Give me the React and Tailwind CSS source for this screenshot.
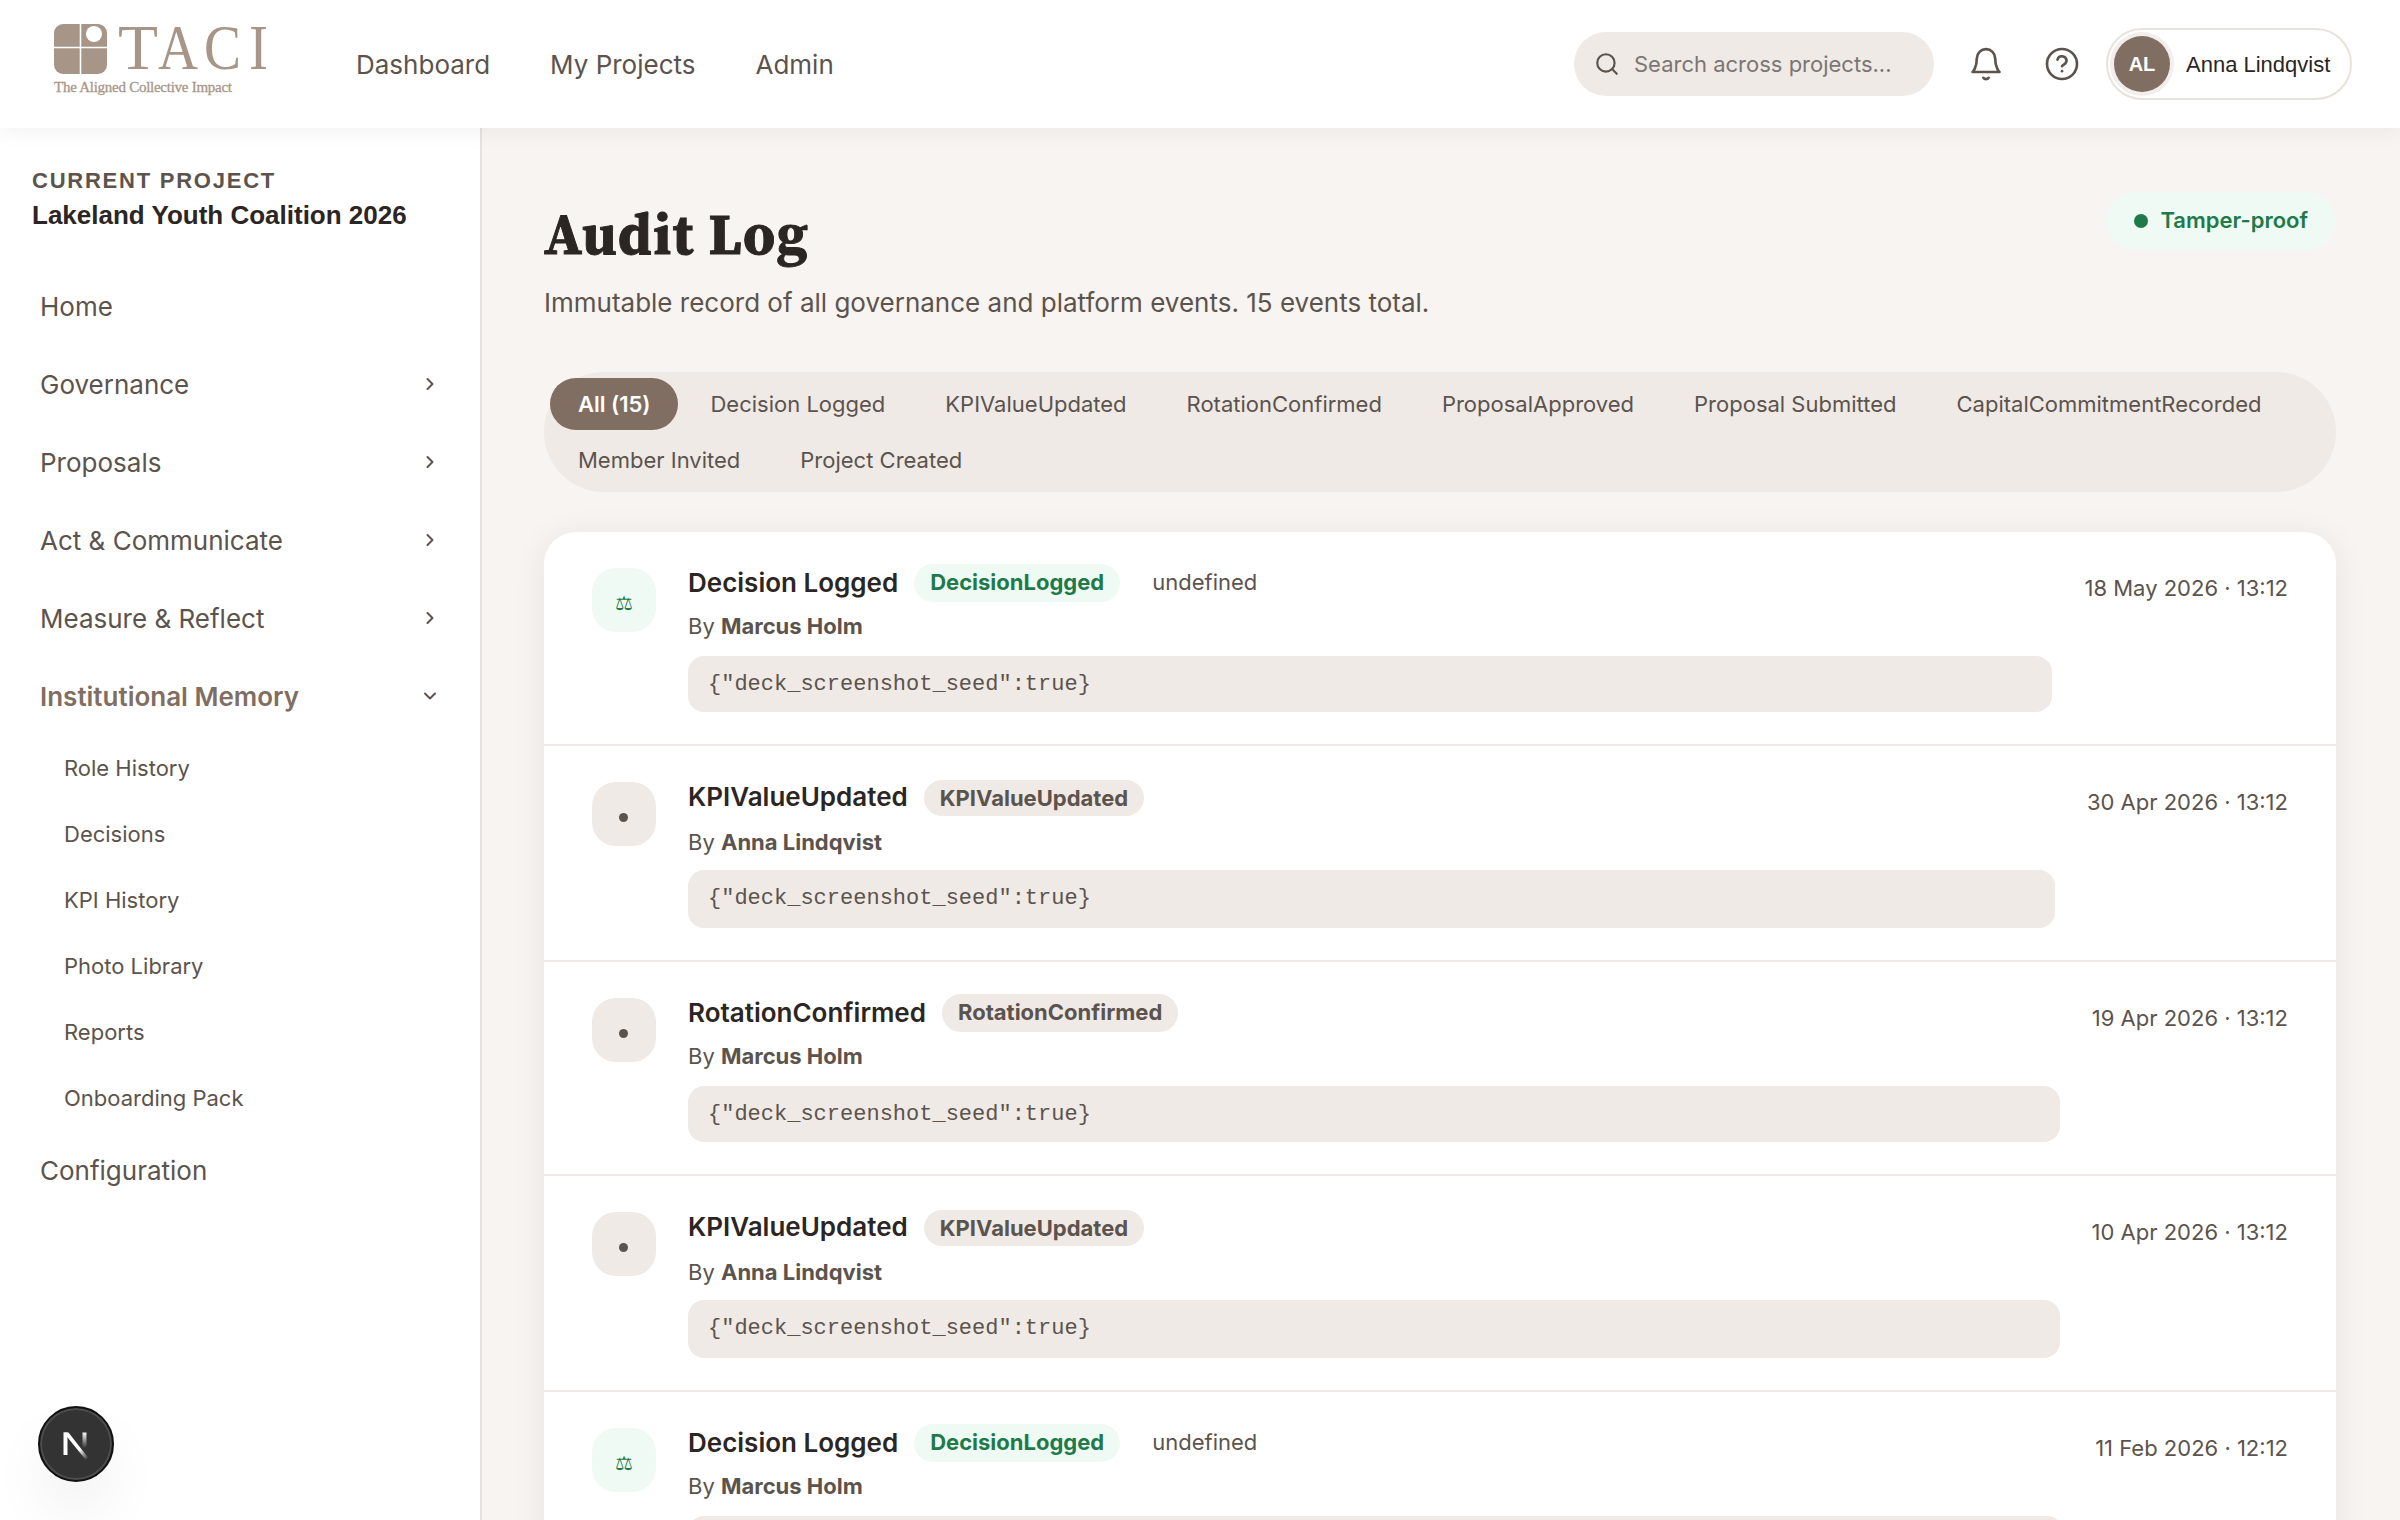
import React from "react";

const navItems = [
  { label: "Home" },
  { label: "Governance", chevron: "right" },
  { label: "Proposals", chevron: "right" },
  { label: "Act & Communicate", chevron: "right" },
  { label: "Measure & Reflect", chevron: "right" },
  { label: "Institutional Memory", chevron: "down", active: true },
];

const memoryItems = [
  "Role History",
  "Decisions",
  "KPI History",
  "Photo Library",
  "Reports",
  "Onboarding Pack",
];

const filters = [
  "All (15)",
  "Decision Logged",
  "KPIValueUpdated",
  "RotationConfirmed",
  "ProposalApproved",
  "Proposal Submitted",
  "CapitalCommitmentRecorded",
  "Member Invited",
  "Project Created",
];

const events = [
  { title: "Decision Logged", tag: "DecisionLogged", by: "Marcus Holm", date: "18 May 2026 · 13:12", decision: true },
  { title: "KPIValueUpdated", tag: "KPIValueUpdated", by: "Anna Lindqvist", date: "30 Apr 2026 · 13:12" },
  { title: "RotationConfirmed", tag: "RotationConfirmed", by: "Marcus Holm", date: "19 Apr 2026 · 13:12" },
  { title: "KPIValueUpdated", tag: "KPIValueUpdated", by: "Anna Lindqvist", date: "10 Apr 2026 · 13:12" },
  { title: "Decision Logged", tag: "DecisionLogged", by: "Marcus Holm", date: "11 Feb 2026 · 12:12", decision: true },
];

function Logo() {
  return (
    <svg width="224" height="104" viewBox="0 -12 224 104" className="text-[#a79687]" fill="currentColor">
      <rect x="2" y="8" width="53" height="50" rx="9" />
      <path d="M28.5 8v50M2 31.5h53" stroke="#fff" strokeWidth="1.6" />
      <circle cx="42" cy="18" r="8" fill="#fff" />
      <g fontFamily="Liberation Serif, serif" fontSize="63">
        <text x="66" y="53" textLength="40" lengthAdjust="spacingAndGlyphs">T</text>
        <text x="106" y="53" textLength="40" lengthAdjust="spacingAndGlyphs">A</text>
        <text x="152" y="53" textLength="37" lengthAdjust="spacingAndGlyphs">C</text>
        <text x="197" y="53" textLength="19" lengthAdjust="spacingAndGlyphs">I</text>
      </g>
      <text x="2" y="76" fontFamily="Liberation Serif, serif" fontSize="15" textLength="178" stroke="currentColor" strokeWidth="0.3">
        The Aligned Collective Impact
      </text>
    </svg>
  );
}

function Header() {
  return (
    <header className="relative z-10 flex h-32 shrink-0 items-center bg-white pl-[52px] pr-12 shadow-[0_4px_20px_rgba(0,0,0,0.05)]">
      <div className="-mt-4">
        <Logo />
      </div>

      <nav className="ml-20 flex gap-[60px] text-[26px] text-[#5c534d]">
        <a>Dashboard</a>
        <a>My Projects</a>
        <a>Admin</a>
      </nav>

      <div className="ml-auto flex items-center">
        {/* Search */}
        <div className="flex h-16 w-[360px] items-center gap-[14px] rounded-full bg-[#efeae6] pl-5 text-[22px] text-[#7b7673]">
          <svg width="26" height="26" viewBox="0 0 24 24" fill="none" stroke="#5c534d" strokeWidth="2" strokeLinecap="round">
            <circle cx="11" cy="11" r="8" />
            <path d="m21 21-4.3-4.3" />
          </svg>
          <span>Search across projects...</span>
        </div>

        {/* Notifications */}
        <svg className="ml-8" width="40" height="40" viewBox="0 0 24 24" fill="none" stroke="#5c534d" strokeWidth="1.6" strokeLinecap="round" strokeLinejoin="round">
          <path d="M17.5 8.6A5.5 5.5 0 0 0 6.5 8.6c0 6-2.6 8.2-2.6 8.2h16.2s-2.6-2.2-2.6-8.2" />
          <path d="M13.6 20.3a1.9 1.7 0 0 1-3.2 0" />
        </svg>

        {/* Help */}
        <svg className="ml-9" width="40" height="40" viewBox="0 0 24 24" fill="none" stroke="#5c534d" strokeWidth="1.6" strokeLinecap="round" strokeLinejoin="round">
          <circle cx="12" cy="12" r="9" />
          <path d="M9.3 9.4a2.75 2.75 0 0 1 5.4.8c0 1.8-2.7 2.4-2.7 3.1" />
          <path d="M12 16.3h.01" />
        </svg>

        {/* User */}
        <div className="ml-6 flex h-[72px] w-[246px] items-center rounded-full border-2 border-[#e8e2dc] bg-white pl-[6px] font-['Liberation_Sans',sans-serif]">
          <div className="flex size-14 items-center justify-center rounded-full bg-[#7f6e61] text-[20px] font-bold text-white ring-4 ring-[#f2eeeb]">
            AL
          </div>
          <span className="ml-4 whitespace-nowrap text-[22px] text-[#2b2523]">Anna Lindqvist</span>
        </div>
      </div>
    </header>
  );
}

function Chevron({ direction }) {
  return (
    <svg width="20" height="20" viewBox="0 0 20 20" fill="none" stroke="#5c534d" strokeWidth="2" strokeLinecap="round" strokeLinejoin="round">
      <path d={direction === "down" ? "M5 7.5 10 12.5l5-5" : "M7.5 5 12.5 10l-5 5"} />
    </svg>
  );
}

function Sidebar() {
  return (
    <aside className="relative w-[482px] shrink-0 border-r-2 border-[#e8e2dc] bg-white">
      <div className="px-8 pt-[39px] font-['Liberation_Sans',sans-serif] font-bold">
        <p className="text-[22px] leading-7 tracking-[1.76px] text-[#5c534d]">CURRENT PROJECT</p>
        <p className="mt-[2px] text-[26px] leading-9 text-[#2b2523]">Lakeland Youth Coalition 2026</p>
      </div>

      {/* Menu */}
      <nav className="mt-[34px] text-[26px] text-[#5c534d]">
        {navItems.map((item) => (
          <div key={item.label} className="flex h-[78px] items-center justify-between pl-10 pr-10">
            <span className={item.active ? "font-semibold text-[#7f6e61]" : ""}>{item.label}</span>
            {item.chevron && <Chevron direction={item.chevron} />}
          </div>
        ))}
        <div className="text-[22px]">
          {memoryItems.map((label) => (
            <div key={label} className="flex h-[66px] items-center pl-16">
              {label}
            </div>
          ))}
        </div>
        <div className="flex h-[78px] items-center pl-10">Configuration</div>
      </nav>

      {/* Dev tools button */}
      <div className="absolute bottom-[38px] left-[38px] flex size-[76px] items-center justify-center rounded-full border-2 border-[#111] bg-[#333] shadow-[inset_0_0_0_2px_#4d4d4d,0_32px_64px_-16px_rgba(0,0,0,0.16)]">
        <svg width="40" height="40" viewBox="0 0 40 40" fill="none">
          <defs>
            <linearGradient id="stem" x1="0" y1="8" x2="0" y2="24" gradientUnits="userSpaceOnUse">
              <stop stopColor="#fff" />
              <stop offset="1" stopColor="#fff" stopOpacity="0" />
            </linearGradient>
            <linearGradient id="diagonal" x1="23" y1="26" x2="31" y2="36" gradientUnits="userSpaceOnUse">
              <stop stopColor="#fff" />
              <stop offset="1" stopColor="#fff" stopOpacity="0" />
            </linearGradient>
          </defs>
          <path d="M9.5 31V8.5" stroke="#fff" strokeWidth="4" />
          <path d="M7.5 8.5h5L32 33.5l-2.5 2Z" fill="url(#diagonal)" />
          <path d="M28.5 8.5V24" stroke="url(#stem)" strokeWidth="4" />
        </svg>
      </div>
    </aside>
  );
}

function EventRow({ event, odd }) {
  return (
    <div className={`flex shrink-0 items-start border-b-2 border-[#efeae6] px-12 ${odd ? "h-[216px]" : "h-[214px]"}`}>
      <div
        className={`mt-9 flex size-16 shrink-0 items-center justify-center rounded-3xl text-[22px] ${
          event.decision ? "bg-[#effaf4] text-[#1f7a4a]" : "bg-[#efeae6] text-[#5c534d]"
        }`}
      >
        {event.decision ? (
          <span className="mt-[5px] font-['DejaVu_Sans',sans-serif] text-[20px]">⚖</span>
        ) : (
          <span className="mr-px mt-[7px] size-[9px] rounded-full bg-[#5c534d]" />
        )}
      </div>

      <div className="ml-8 flex-1 text-[22px] text-[#5c534d]">
        <div className="mt-8 flex h-[38px] items-center gap-4">
          <h3 className="text-[26px] font-semibold leading-[38px] text-[#2b2523]">{event.title}</h3>
          <span
            className={`rounded-full px-4 font-bold ${odd ? "mt-[2px] h-9 leading-9" : "h-[38px] leading-[36px]"} ${
              event.decision ? "bg-[#effaf4] text-[#1f7a4a]" : "bg-[#efeae6]"
            }`}
          >
            {event.tag}
          </span>
          {event.decision && <span className="h-[38px] px-4 leading-[36px]">undefined</span>}
        </div>
        <p className={`leading-8 ${odd ? "mt-[10px]" : "mt-2"}`}>
          By <span className="font-bold">{event.by}</span>
        </p>
        <div
          className={`rounded-2xl bg-[#efeae6] px-5 font-['Liberation_Mono',monospace] ${
            odd ? "mt-3 h-[58px] leading-[58px]" : "mt-[14px] h-14 leading-[58px]"
          }`}
        >
          {'{"deck_screenshot_seed":true}'}
        </div>
      </div>

      <time className="ml-8 mt-10 whitespace-nowrap text-[22px] leading-8 text-[#5c534d]">{event.date}</time>
    </div>
  );
}

function AuditLog() {
  return (
    <main className="flex-1 overflow-hidden pl-[62px] pr-16 pt-16">
      <div className="flex h-[180px] items-start justify-between">
        <div>
          <h1 className="mt-3 font-['Source_Serif_4','Noto_Serif_CJK_SC',serif] text-[57px] font-bold leading-[60px] tracking-[1.5px] text-[#2b2523] [-webkit-text-stroke:0.9px_#2b2523]">
            Audit Log
          </h1>
          <p className="mt-[21px] text-[26px] leading-9 text-[#5c534d]">
            Immutable record of all governance and platform events. 15 events total.
          </p>
        </div>
        <div className="flex h-[58px] items-center gap-3 rounded-full bg-[#effaf4] px-7 text-[22px] font-semibold leading-[56px] text-[#1f7a4a]">
          <span className="size-[14px] rounded-full bg-[#1f7a4a]" />
          <span className="-mt-0.5">Tamper-proof</span>
        </div>
      </div>

      {/* Filters */}
      <div className="flex flex-wrap gap-1 rounded-full bg-[#efeae6] p-[6px] text-[22px] text-[#5c534d]">
        {filters.map((label, i) => (
          <button
            key={label}
            className={`h-[52px] rounded-full px-7 ${i === 0 ? "bg-[#7f6e61] font-semibold tracking-[-0.02px] text-white" : ""}`}
          >
            {label}
          </button>
        ))}
      </div>

      {/* Events */}
      <div className="mt-10 overflow-hidden rounded-4xl bg-white shadow-[0_4px_32px_rgba(44,36,32,0.08)]">
        {events.map((event, i) => (
          <EventRow key={event.date} event={event} odd={i % 2 === 1} />
        ))}
      </div>
    </main>
  );
}

export default function App() {
  return (
    <div className="flex h-screen flex-col overflow-hidden bg-[#f8f4f1] font-['Inter',sans-serif]">
      <Header />
      <div className="flex min-h-0 flex-1">
        <Sidebar />
        <AuditLog />
      </div>
    </div>
  );
}
